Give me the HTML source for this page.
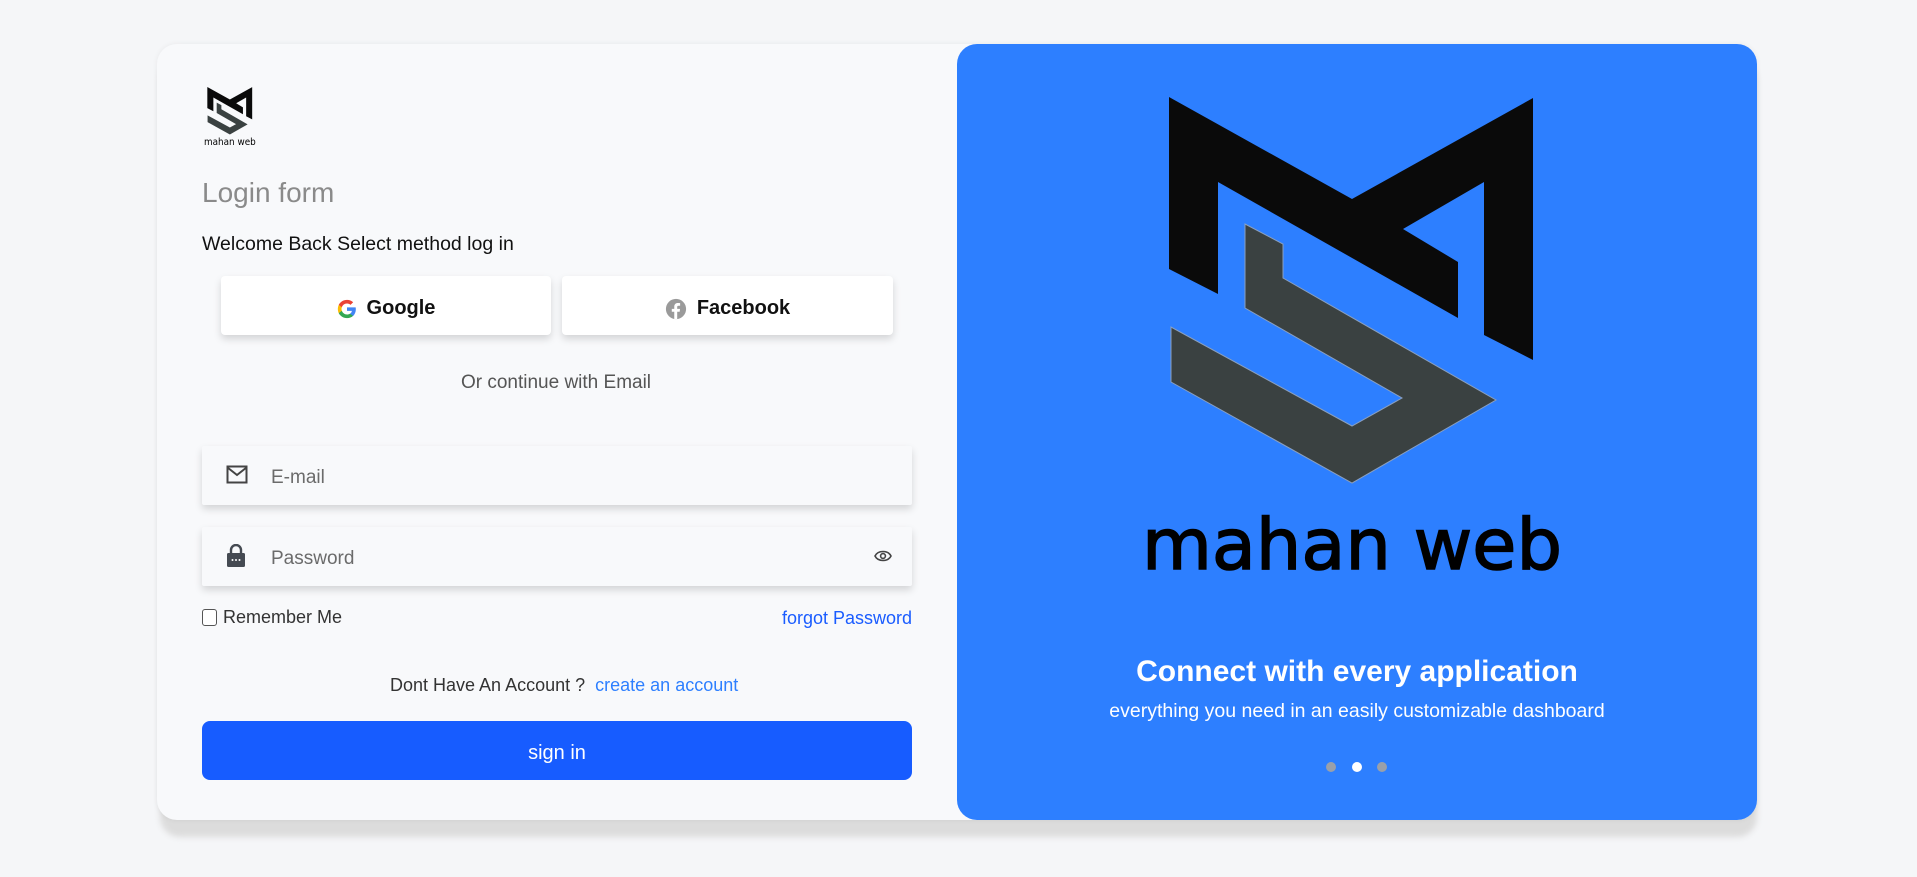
<!DOCTYPE html>
<html><head><meta charset="utf-8"><style>
*{box-sizing:border-box;margin:0;padding:0}
body{width:1917px;height:877px;background:#f5f6f8;font-family:"Liberation Sans",sans-serif;position:relative;overflow:hidden}
.shadow{position:absolute;left:160px;top:60px;width:1597px;height:777px;border-radius:20px;background:#dcdcdc;filter:blur(3px)}
.card{position:absolute;left:157px;top:44px;width:1600px;height:776px;border-radius:20px;background:#f8f9fb;box-shadow:0 0 6px rgba(0,0,0,.06)}
.blue{position:absolute;left:957px;top:44px;width:800px;height:776px;border-radius:20px;background:#2d7fff}
.abs{position:absolute}
.btn{position:absolute;top:276px;height:59px;background:#fff;border-radius:4px;box-shadow:0 4px 8px rgba(0,0,0,.15);display:flex;align-items:center;justify-content:center;font-size:20px;font-weight:bold;color:#111;gap:10px;padding-top:6px}
.inp{position:absolute;left:202px;width:710px;height:59px;background:#f8f9fb;box-shadow:0 4px 8px rgba(0,0,0,.15);border-radius:2px}
.inp span{position:absolute;left:69px;top:21px;font-size:19px;color:#6b6b6b}
</style></head><body>
<div class="shadow"></div>
<div class="card"></div>
<div class="blue"></div>

<svg class="abs" style="left:204px;top:86px" width="52" height="60" viewBox="0 0 422 485">
<polygon fill="#0a0a0a" points="27,7 210,109 391,8 391,270 342,245 342,92 261,139 316,172 316,228 76,92 76,204 27,179"/>
<polygon fill="#3a4141" points="103,134 141,154 141,188 354,310 210,393 29,292 29,237 210,336 260,308 103,218"/>
<text x="0" y="478" font-size="80" textLength="420" lengthAdjust="spacingAndGlyphs" font-family="DejaVu Sans,sans-serif" fill="#000">mahan web</text>
</svg>

<div class="abs" style="left:202px;top:177px;font-size:28px;color:#8a8a8a">Login form</div>
<div class="abs" style="left:202px;top:233px;font-size:19.5px;color:#111">Welcome Back Select method log in</div>

<div class="btn" style="left:221px;width:330px">
<svg width="20" height="20" viewBox="0 0 24 24"><path fill="#4285F4" d="M22.6 12.3c0-.8-.1-1.5-.2-2.3H12v4.3h5.9c-.3 1.4-1 2.5-2.2 3.3v2.8h3.6c2.1-1.9 3.3-4.8 3.3-8.1z"/><path fill="#34A853" d="M12 23c3 0 5.5-1 7.3-2.7l-3.6-2.8c-1 .7-2.2 1.1-3.7 1.1-2.9 0-5.3-1.9-6.2-4.5H2.1v2.9C3.9 20.6 7.7 23 12 23z"/><path fill="#FBBC05" d="M5.8 14.1c-.2-.7-.4-1.4-.4-2.1s.1-1.4.4-2.1V7H2.1C1.4 8.5 1 10.2 1 12s.4 3.5 1.1 5l3.7-2.9z"/><path fill="#EA4335" d="M12 5.4c1.6 0 3.1.6 4.2 1.7l3.2-3.2C17.5 2.1 15 1 12 1 7.7 1 3.9 3.4 2.1 7l3.7 2.9c.9-2.6 3.3-4.5 6.2-4.5z"/></svg>Google</div>
<div class="btn" style="left:562px;width:331px">
<svg width="22" height="22" viewBox="0 0 24 24"><circle cx="12" cy="12" r="11" fill="#9a9a9a"/><path fill="#fff" d="M13.3 23v-8h2.7l.4-3.1h-3.1v-2c0-.9.3-1.5 1.6-1.5h1.6V5.6c-.3 0-1.3-.1-2.4-.1-2.4 0-4 1.4-4 4.1v2.3H7.4V15h2.7v8z"/></svg>Facebook</div>

<div class="abs" style="left:0;width:1112px;text-align:center;top:372px;font-size:19px;color:#555">Or continue with Email</div>

<div class="inp" style="top:446px">
<svg class="abs" style="left:24px;top:19px" width="22" height="19" viewBox="0 0 22 19"><rect x="1.5" y="1.5" width="19" height="16" fill="none" stroke="#444" stroke-width="2"/><path d="M1.5 2.5 L11 10 L20.5 2.5" fill="none" stroke="#444" stroke-width="2"/></svg>
<span>E-mail</span></div>
<div class="inp" style="top:527px">
<svg class="abs" style="left:25px;top:17px" width="18" height="23" viewBox="0 0 18 23"><path d="M4 10V6a5 5 0 0 1 10 0v4" fill="none" stroke="#454a52" stroke-width="2.4"/><rect x="0" y="9" width="18" height="14" rx="1.5" fill="#454a52"/><circle cx="5.5" cy="16" r="1" fill="#fff"/><circle cx="9" cy="16" r="1" fill="#fff"/><circle cx="12.5" cy="16" r="1" fill="#fff"/></svg>
<span>Password</span>
<svg class="abs" style="left:672px;top:22px" width="18" height="14" viewBox="0 0 18 14"><path d="M1 7 C4 1 14 1 17 7 C14 13 4 13 1 7Z" fill="none" stroke="#444" stroke-width="1.6"/><circle cx="9" cy="7" r="2.4" fill="none" stroke="#444" stroke-width="1.6"/></svg>
</div>

<div class="abs" style="left:202px;top:609px;width:15px;height:17px;border:1.5px solid #555;border-radius:3px;background:#fff"></div>
<div class="abs" style="left:223px;top:607px;font-size:18px;color:#333">Remember Me</div>
<div class="abs" style="left:700px;width:212px;text-align:right;top:608px;font-size:18px;color:#1a5cff">forgot Password</div>

<div class="abs" style="left:390px;top:675px;font-size:18px;color:#333">Dont Have An Account ? &nbsp;<span style="color:#2d7fff">create an account</span></div>

<div class="abs" style="left:202px;top:721px;width:710px;height:59px;background:#175cff;border-radius:8px;color:#fff;font-size:20px;text-align:center;line-height:64px">sign in</div>

<svg class="abs" style="left:1142px;top:90px" width="422" height="485" viewBox="0 0 422 485">
<polygon fill="#0a0a0a" points="27,7 210,109 391,8 391,270 342,245 342,92 261,139 316,172 316,228 76,92 76,204 27,179"/>
<polygon fill="#3a4141" stroke="#8aa0c0" stroke-width="1" points="103,134 141,154 141,188 354,310 210,393 29,292 29,237 210,336 260,308 103,218"/>
<text x="0" y="479" font-size="70" textLength="420" lengthAdjust="spacingAndGlyphs" font-family="DejaVu Sans,sans-serif" fill="#000" stroke="#000" stroke-width="1.5">mahan web</text>
</svg>

<div class="abs" style="left:957px;width:800px;text-align:center;top:655px;font-size:30px;font-weight:bold;color:#fff">Connect with every application</div>
<div class="abs" style="left:957px;width:800px;text-align:center;top:700px;font-size:19.5px;color:#fff">everything you need in an easily customizable dashboard</div>
<div class="abs" style="left:1326px;top:762px;width:10px;height:10px;border-radius:50%;background:#9aa0aa"></div>
<div class="abs" style="left:1352px;top:762px;width:10px;height:10px;border-radius:50%;background:#fff"></div>
<div class="abs" style="left:1377px;top:762px;width:10px;height:10px;border-radius:50%;background:#9aa0aa"></div>
</body></html>
